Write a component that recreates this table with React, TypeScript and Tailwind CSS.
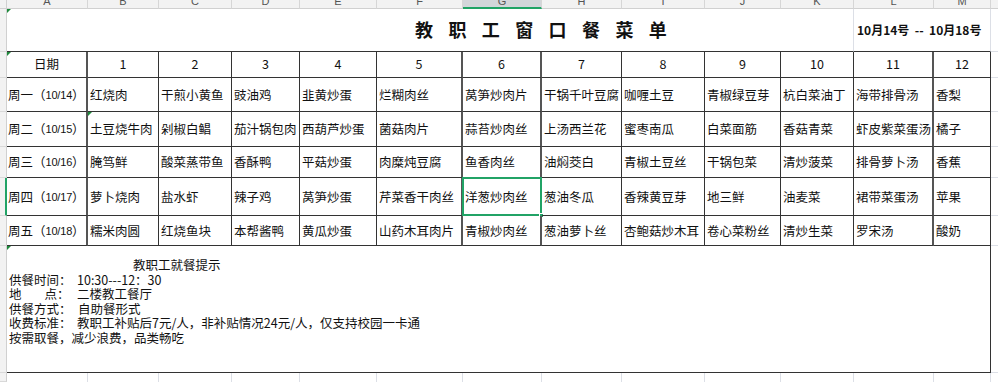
const letters = ["A", "B", "C", "D", "E", "F", "G", "H", "I", "J", "K", "L", "M"];

const menu = [
  ["周一", "10/14", "红烧肉", "干煎小黄鱼", "豉油鸡", "韭黄炒蛋", "烂糊肉丝", "莴笋炒肉片", "干锅千叶豆腐", "咖喱土豆", "青椒绿豆芽", "杭白菜油丁", "海带排骨汤", "香梨"],
  ["周二", "10/15", "土豆烧牛肉", "剁椒白鲳", "茄汁锅包肉", "西葫芦炒蛋", "菌菇肉片", "蒜苔炒肉丝", "上汤西兰花", "蜜枣南瓜", "白菜面筋", "香菇青菜", "虾皮紫菜蛋汤", "橘子"],
  ["周三", "10/16", "腌笃鲜", "酸菜蒸带鱼", "香酥鸭", "平菇炒蛋", "肉糜炖豆腐", "鱼香肉丝", "油焖茭白", "青椒土豆丝", "干锅包菜", "清炒菠菜", "排骨萝卜汤", "香蕉"],
  ["周四", "10/17", "萝卜烧肉", "盐水虾", "辣子鸡", "莴笋炒蛋", "芹菜香干肉丝", "洋葱炒肉丝", "葱油冬瓜", "香辣黄豆芽", "地三鲜", "油麦菜", "裙带菜蛋汤", "苹果"],
  ["周五", "10/18", "糯米肉圆", "红烧鱼块", "本帮酱鸭", "黄瓜炒蛋", "山药木耳肉片", "青椒炒肉丝", "葱油萝卜丝", "杏鲍菇炒木耳", "卷心菜粉丝", "清炒生菜", "罗宋汤", "酸奶"],
];

// columns followed by a heavier grey rule
const heavy = [0, 5, 6, 11];

const Flag = () => (
  <span className="absolute left-0 top-0 w-0 h-0 border-t-[4px] border-r-[4px] border-t-[#1e8a3c] border-r-transparent" />
);

const RowHead = ({ active = false }: { active?: boolean }) => (
  <div className={`bg-[#f2f2f2] border-b border-[#d9d9d9] ${active ? "border-r-2 border-r-[#21a366]" : "border-r border-r-[#d0d0d0]"}`} />
);

const App = () => {
  return (
    <div className="w-[998px] h-[382px] overflow-hidden bg-white text-[#111] font-['Noto_Sans_CJK_SC','Liberation_Sans',sans-serif]">
      <div className="grid grid-cols-[7px_81px_71px_73px_68px_77px_86px_79px_80px_83px_76px_73px_80px_57px_7px] grid-rows-[9px_43px_26px_34px_35px_31px_38px_30px_127px_9px]">
        {/* column letters */}
        <div className="bg-[#f2f2f2] border-r border-b border-[#d0d0d0]" />
        {letters.map((l) => (
          <div
            key={l}
            className={`overflow-hidden text-center text-[11px] text-[#555] font-['Liberation_Sans',sans-serif] border-r border-[#d6d6d6] ${
              l === "G" ? "bg-[#d3d6da] border-b-2 border-b-[#21a366]" : "bg-[#f2f2f2] border-b border-b-[#d0d0d0]"
            }`}
          >
            <span className="block leading-[11px] -mt-[4px]">{l}</span>
          </div>
        ))}
        <div className="bg-[#f2f2f2] border-b border-[#d0d0d0]" />

        {/* title */}
        <RowHead />
        <div className="relative col-span-11 flex items-center pl-[408px] pb-[1px] border-b border-b-[#333] border-r border-r-[#dcdfe6]">
          <Flag />
          <span className="text-[18px] font-bold tracking-[15.4px] whitespace-nowrap">教职工窗口餐菜单</span>
        </div>
        <div className="col-span-2 flex items-center pl-[3px] pb-[1px] text-[12px] font-bold whitespace-nowrap border-b border-b-[#333] border-r border-r-[#dcdfe6]">
          10月14号&nbsp;&nbsp;--&nbsp;&nbsp;10月18号
        </div>
        <div className="border-b border-[#dcdfe6]" />

        {/* header row */}
        <RowHead />
        {["日期", "1", "2", "3", "4", "5", "6", "7", "8", "9", "10", "11", "12"].map((h, i) => (
          <div
            key={h}
            className={`relative flex items-center justify-center text-[12.5px] border-b border-[#333] ${
              heavy.includes(i) ? "border-r-2 border-r-[#555]" : "border-r border-r-[#333]"
            }`}
          >
            {i === 0 && <Flag />}
            {h}
          </div>
        ))}
        <div className="border-b border-[#dcdfe6]" />

        {/* menu rows */}
        {menu.map(([day, date, ...dishes], r) => (
          <>
            <RowHead key={`h${r}`} active={r === 3} />
            <div key={`d${r}`} className="flex items-center pl-[1px] pt-[1px] text-[12.5px] whitespace-nowrap border-b border-[#333] border-r-2 border-r-[#555]">
              {day}（<span className="text-[11px] font-['Liberation_Sans',sans-serif] tracking-[-0.2px]">{date}</span>）
            </div>
            {dishes.map((d, j) => {
              const i = j + 1;
              return (
                <div
                  key={`${r}-${i}`}
                  className={`relative flex items-center pl-[2px] pt-[1px] text-[12.5px] whitespace-nowrap border-b border-[#333] ${
                    heavy.includes(i) ? "border-r-2 border-r-[#555]" : "border-r border-r-[#333]"
                  }`}
                >
                  {r === 1 && i === 1 && <Flag />}
                  {d}
                  {r === 3 && i === 6 && (
                    <>
                      <span className="absolute -left-px -top-px -right-[2px] -bottom-px border-2 border-[#21a366] pointer-events-none" />
                      <span className="absolute -right-[4px] -bottom-[3px] w-[5px] h-[5px] bg-[#21a366] border border-white" />
                    </>
                  )}
                </div>
              );
            })}
            <div key={`f${r}`} className="border-b border-[#dcdfe6]" />
          </>
        ))}

        {/* notes */}
        <RowHead />
        <div className="relative col-span-13 pl-[2px] pt-[12px] text-[12.5px] leading-[14.6px] whitespace-nowrap border-r border-b border-[#333]">
          <Flag />
          <div className="pl-[124px]">教职工就餐提示</div>
          <div className="flex">
            <span className="w-[68px]">供餐时间：</span>
            <span>10:30---12：30</span>
          </div>
          <div className="flex">
            <span className="w-[68px]">
              地<span className="ml-[23px]">点：</span>
            </span>
            <span>二楼教工餐厅</span>
          </div>
          <div className="flex">
            <span className="w-[69px]">供餐方式：</span>
            <span>自助餐形式</span>
          </div>
          <div className="flex">
            <span className="w-[68px]">收费标准：</span>
            <span>教职工补贴后7元/人，非补贴情况24元/人，仅支持校园一卡通</span>
          </div>
          <div>按需取餐，减少浪费，品类畅吃</div>
        </div>
        <div className="border-b border-[#dcdfe6]" />

        {/* empty grid below */}
        <RowHead />
        {letters.map((l) => (
          <div key={`e${l}`} className="border-r border-[#dcdfe6]" />
        ))}
        <div />
      </div>
    </div>
  );
};

export default App;
